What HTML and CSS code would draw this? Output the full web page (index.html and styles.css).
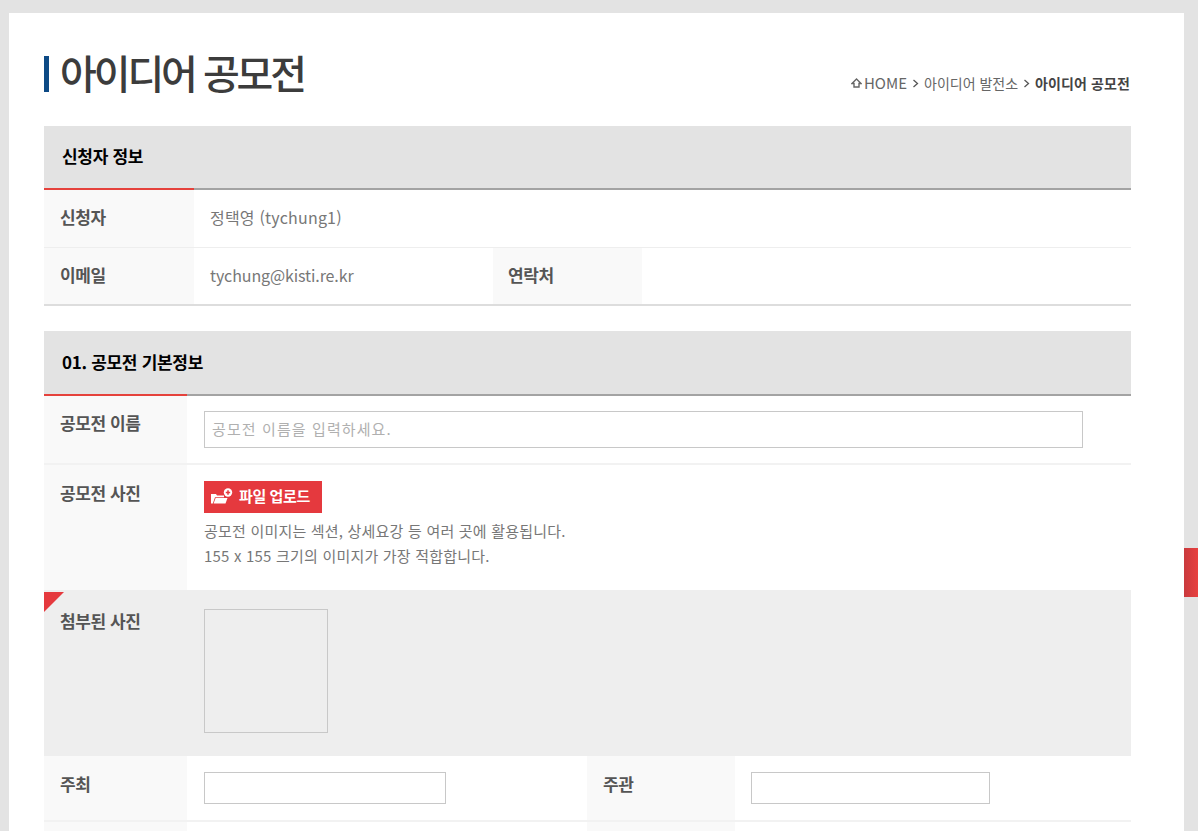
FILE: index.html
```html
<!DOCTYPE html>
<html lang="ko">
<head>
  <meta charset="UTF-8" />
  <title>아이디어 공모전</title>
  <link rel="stylesheet" href="styles.css">
</head>
<body>

  <div class="side-tab"></div>

  <div class="page">
    <div class="title-bar">
      <h1>아이디어 공모전</h1>
      <div class="crumbs">
        <svg class="home-icon" width="11" height="10" viewBox="0 0 11 10"><path d="M5.5 1 L10 5.5 H8 V9 H3 V5.5 H1 Z" fill="none" stroke="#666" stroke-width="1.4"/></svg>
        <span class="crumb-home">HOME</span>
        <svg class="crumb-sep" width="7" height="9" viewBox="0 0 7 9"><path d="M1.500 1 L5.500 4.500 L1.500 8" fill="none" stroke="#555" stroke-width="1.300"/></svg>
        <span>아이디어 발전소</span>
        <svg class="crumb-sep" width="7" height="9" viewBox="0 0 7 9"><path d="M1.500 1 L5.500 4.500 L1.500 8" fill="none" stroke="#555" stroke-width="1.300"/></svg>
        <b>아이디어 공모전</b>
      </div>
    </div>

    <!-- applicant -->
    <div class="sec-head wide"><span>신청자 정보</span></div>
    <div class="row info-row">
      <div class="label">신청자</div>
      <div class="value">정택영 (tychung1)</div>
    </div>
    <div class="row info-row last">
      <div class="label">이메일</div>
      <div class="value email">tychung@kisti.re.kr</div>
      <div class="label contact">연락처</div>
      <div class="value"></div>
    </div>

    <!-- contest info -->
    <div class="sec-head second"><span>01. 공모전 기본정보</span></div>
    <div class="row form-row name-row">
      <div class="label">공모전 이름</div>
      <div class="field">
        <input class="text-input name-input" type="text" placeholder="공모전 이름을 입력하세요.">
      </div>
    </div>
    <div class="row form-row photo-row">
      <div class="label">공모전 사진</div>
      <div class="field">
        <button class="upload-btn">
          <svg width="24" height="18" viewBox="0 0 24 18"><path d="M1 15.500 V6 H6 L7 7.500 H14 V9.200 H5 L2.800 15.500 Z" fill="#fff"/><path d="M3.600 15.500 L5.600 9.900 H17.500 L15.500 15.500 Z" fill="#fff"/><circle cx="18" cy="4.500" r="4.200" fill="#fff"/><path d="M18 2.300 V6.700 M15.800 4.500 H20.200" stroke="#e5393e" stroke-width="1.500"/></svg>
          <span>파일 업로드</span>
        </button>
        <p class="help">공모전 이미지는 섹션, 상세요강 등 여러 곳에 활용됩니다.<br>155 x 155 크기의 이미지가 가장 적합합니다.</p>
      </div>
    </div>
    <div class="row form-row attached-row">
      <div class="corner"></div>
      <div class="label">첨부된 사진</div>
      <div class="field">
        <div class="thumb"></div>
      </div>
    </div>
    <div class="row form-row host-row">
      <div class="label">주최</div>
      <div class="field host-field"><input class="text-input host-input" type="text"></div>
      <div class="label sub-label">주관</div>
      <div class="field"><input class="text-input sub-input" type="text"></div>
    </div>
    <div class="row form-row next-row">
      <div class="label"></div>
      <div class="field host-field"></div>
      <div class="label sub-label"></div>
      <div class="field"></div>
    </div>
  </div>

</body>
</html>
```

FILE: styles.css
```css
html, body {
  height: 100%;
  margin: 0;
  overflow: hidden;
}

body {
  background: #e3e3e3;
  font-family: "Noto Sans CJK KR", "Noto Sans", sans-serif;
  color: #777;
  padding: 13px 14px 0 9px;
  box-sizing: border-box;
}

.page {
  background: #fff;
  width: 1175px;
  height: 818px;
  padding: 37px 53px 0 35px;
  box-sizing: border-box;
  overflow: hidden;
}

.side-tab {
  position: absolute;
  top: 548px;
  right: 0;
  width: 14px;
  height: 49px;
  background: linear-gradient(to right, #c93a3e, #e8403f);
}

.title-bar {
  display: flex;
  justify-content: space-between;
  align-items: flex-end;
  height: 76px;
  padding-right: 1px;
}

h1 {
  margin: 0 0 34px 0;
  height: 36px;
  line-height: 32px;
  padding-left: 11px;
  border-left: 5px solid #0d4a85;
  font-size: 40px;
  font-weight: 500;
  letter-spacing: -3.1px;
  color: #3c3c3c;
  white-space: nowrap;
}

.crumbs {
  display: flex;
  align-items: center;
  gap: 5px;
  font-size: 14px;
  line-height: 20px;
  color: #666;
  margin-bottom: 33px;
}

.crumbs b {
  color: #444;
  font-weight: 700;
  letter-spacing: 0.1px;
}

.crumb-home {
  font-size: 15px;
  margin-left: -3px;
}

.sec-head {
  height: 62px;
  background: #e3e3e3;
  border-bottom: 2px solid #a3a3a3;
  position: relative;
  display: flex;
  align-items: center;
  padding: 0 0 3px 18px;
  box-sizing: content-box;
  font-size: 17px;
  font-weight: 700;
  color: #000;
  letter-spacing: -0.3px;
}

.sec-head > span {
  display: block;
}

.sec-head.wide {
  height: 59px;
}

.sec-head::after {
  content: "";
  position: absolute;
  left: 0;
  bottom: -2px;
  height: 2px;
  width: 143px;
  background: #e5423c;
}

.sec-head.wide::after {
  width: 150px;
}

.sec-head.second {
  margin-top: 25px;
  height: 60px;
}

.row {
  display: flex;
  position: relative;
}

.label {
  background: #f9f9f9;
  font-size: 17px;
  font-weight: 700;
  color: #555;
  padding-left: 16px;
  box-sizing: border-box;
  flex: none;
  letter-spacing: -0.4px;
}

.info-row {
  height: 58px;
  border-bottom: 1px solid #eee;
  box-sizing: border-box;
  align-items: stretch;
}

.info-row.last {
  border-bottom: 2px solid #ddd;
}

.info-row .label {
  width: 150px;
  line-height: 54px;
}

.info-row .value {
  font-size: 16px;
  line-height: 54px;
  padding-left: 16px;
  letter-spacing: 0.2px;
}

.info-row .value.email {
  width: 299px;
  box-sizing: border-box;
  letter-spacing: -0.1px;
}

.info-row .label.contact {
  width: 149px;
  padding-left: 15px;
}

.form-row {
  border-bottom: 2px solid #f2f2f2;
  box-sizing: border-box;
}

.form-row .label {
  width: 143px;
  line-height: 24px;
  padding-top: 15px;
}

.field {
  padding-left: 17px;
  flex: 1;
  box-sizing: border-box;
}

.name-row {
  height: 69px;
}

.name-row .field {
  padding-top: 15px;
}

.text-input {
  border: 1px solid #c8c8c8;
  background: #fff;
  box-sizing: border-box;
  padding: 0 7px;
  font-family: inherit;
  font-size: 15px;
  display: block;
}

.name-input {
  width: 879px;
  height: 37px;
  padding-bottom: 3px;
}

.text-input::placeholder {
  color: #b0b0b0;
  letter-spacing: 1.1px;
}

.photo-row {
  height: 125px;
  border-bottom: 0;
}

.photo-row .label {
  padding-top: 16px;
}

.photo-row .field {
  padding-top: 16px;
}

.upload-btn {
  display: flex;
  align-items: center;
  gap: 5px;
  width: 118px;
  height: 32px;
  padding: 0 0 3px 6px;
  border: 0;
  background: #e5393e;
  color: #fff;
  font-family: inherit;
  font-size: 15px;
  font-weight: 700;
  letter-spacing: -0.4px;
}

.upload-btn svg {
  margin-top: 3px;
}

.help {
  margin: 5px 0 0;
  font-size: 15px;
  line-height: 25px;
  letter-spacing: 0.2px;
}

.attached-row {
  height: 166px;
  background: #eee;
  border-bottom: 0;
}

.attached-row .label {
  background: none;
  padding-top: 19px;
}

.attached-row .field {
  padding-top: 19px;
}

.corner {
  position: absolute;
  left: 0;
  top: 2px;
  width: 0;
  height: 0;
  border-top: 20px solid #e5393e;
  border-right: 20px solid transparent;
}

.thumb {
  width: 124px;
  height: 124px;
  border: 1px solid #c8c8c8;
  box-sizing: border-box;
}

.host-row {
  height: 66px;
}

.host-row .label {
  padding-top: 16px;
}

.host-row .field {
  padding-top: 16px;
}

.next-row {
  height: 9px;
  border-bottom: 0;
}

.host-field {
  flex: none;
  width: 400px;
}

.form-row .sub-label {
  width: 148px;
  padding-left: 16px;
}

.field:last-child {
  padding-left: 16px;
}

.name-row .field:last-child,
.photo-row .field:last-child,
.attached-row .field:last-child {
  padding-left: 17px;
}

.host-input {
  width: 242px;
  height: 32px;
}

.sub-input {
  width: 239px;
  height: 32px;
}
```
